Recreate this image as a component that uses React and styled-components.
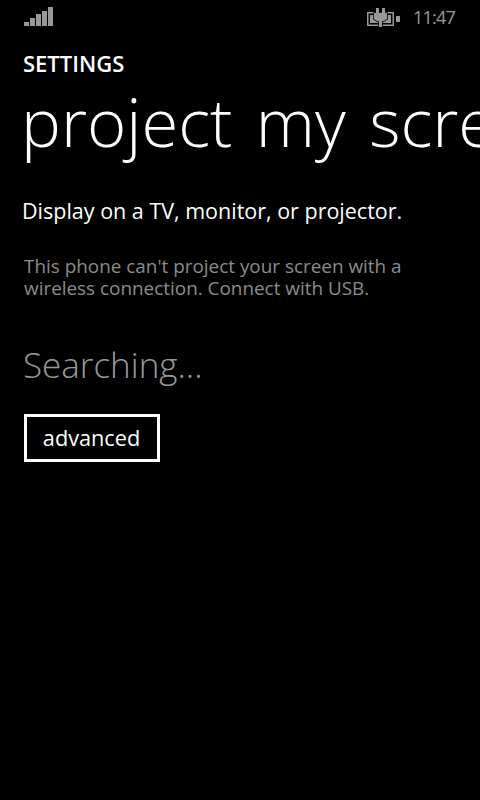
import React from "react";
import styled, { createGlobalStyle } from "styled-components";

const Global = createGlobalStyle`
  html, body { margin: 0; padding: 0; background: #000; }
  body { font-family: "Open Sans", "Noto Sans", sans-serif; }
`;

const Phone = styled.div`
  width: 480px;
  height: 800px;
  overflow: hidden;
  background: #000;
  color: #fff;
`;

const StatusBar = styled.div`
  display: flex;
  align-items: flex-start;
  justify-content: space-between;
  height: 32px;
  padding: 7px 25px 0 24px;
  box-sizing: border-box;
`;

const Signal = styled.div`
  display: flex;
  align-items: flex-end;
  gap: 1px;
  height: 19px;
`;

const Bar = styled.span`
  width: 5px;
  height: ${(p) => p.$h}px;
  background: #999;
`;

const StatusRight = styled.div`
  display: flex;
  align-items: center;
  gap: 13px;
  height: 20px;
`;

const Time = styled.span`
  font-size: 18px;
  line-height: 20px;
  letter-spacing: -0.8px;
  color: #999;
`;

const Content = styled.div`
  padding: 0 24px;
`;

const PageName = styled.div`
  margin: 17px 0 0 -1px;
  font-size: 22px;
  line-height: 28px;
  font-weight: 600;
`;

const Title = styled.h1`
  margin: 4px 0 0 -3px;
  font-size: 67px;
  line-height: 80px;
  font-weight: 300;
  word-spacing: 6px;
  white-space: nowrap;
`;

const Lead = styled.p`
  margin: 36px 0 0 -2px;
  font-size: 21.5px;
  line-height: 28px;
`;

const Note = styled.p`
  margin: 30px 0 0;
  width: 440px;
  font-size: 18.9px;
  line-height: 22px;
  color: #8c8c8c;
`;

const Searching = styled.div`
  margin: 44px 0 0 -1px;
  font-size: 35px;
  line-height: 44px;
  font-weight: 300;
  color: #999;
`;

const Advanced = styled.button`
  display: block;
  margin-top: 27px;
  width: 136px;
  height: 48px;
  padding: 0 1px 2px 0;
  border: 3px solid #fff;
  background: transparent;
  color: #fff;
  font-family: inherit;
  font-size: 21.7px;
  font-weight: 500;
`;

const BatteryIcon = () => (
  <svg width="33" height="19" viewBox="0 0 33 19">
    <rect x="0.75" y="4.75" width="25.5" height="12.5" fill="none" stroke="#999" strokeWidth="1.5" />
    <rect x="3" y="7" width="21" height="8" fill="#999" />
    <rect x="29" y="8" width="4" height="6" fill="#999" />
    <path
      d="M9 0h3v5h3V0h3v5h2v6l-3 2h-2v6h-3v-6h-2l-3-2V5h2z"
      fill="#999"
      stroke="#000"
      strokeWidth="1.5"
      paintOrder="stroke"
    />
  </svg>
);

export default function App() {
  return (
    <Phone>
      <Global />
      <StatusBar>
        <Signal>
          {[4, 8, 12, 15, 19].map((h) => (
            <Bar key={h} $h={h} />
          ))}
        </Signal>
        <StatusRight>
          <BatteryIcon />
          <Time>11:47</Time>
        </StatusRight>
      </StatusBar>
      <Content>
        <PageName>SETTINGS</PageName>
        <Title>project my screen</Title>
        <Lead>Display on a TV, monitor, or projector.</Lead>
        <Note>This phone can't project your screen with a wireless connection. Connect with USB.</Note>
        <Searching>Searching...</Searching>
        <Advanced>advanced</Advanced>
      </Content>
    </Phone>
  );
}
